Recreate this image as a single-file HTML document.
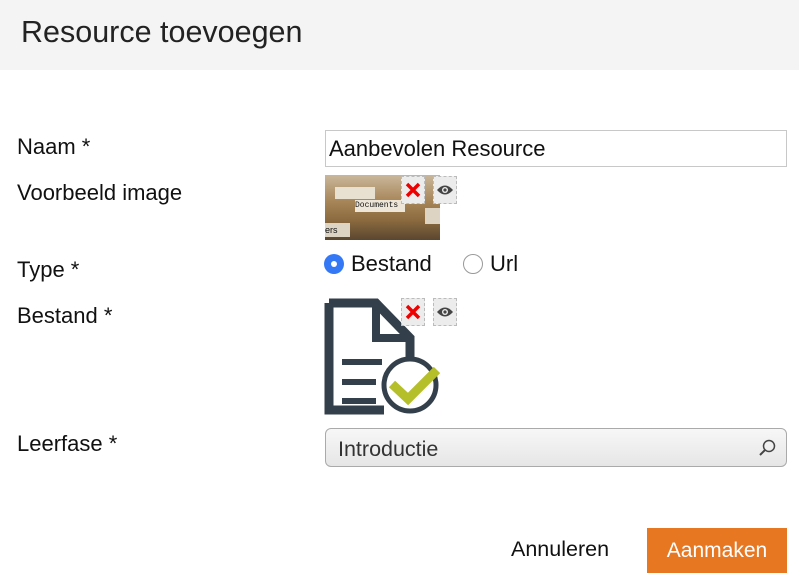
<!DOCTYPE html>
<html><head><meta charset="utf-8"><style>
body{margin:0;width:799px;height:587px;background:#fff;font-family:"Liberation Sans",Arial,sans-serif;color:#111;position:relative;overflow:hidden}
.a{position:absolute}
.hdr{left:0;top:0;width:799px;height:70px;background:#f4f4f4}
.lbl{font-size:22px;left:17px}
.box{border:1px dashed #bbb;background:#ececec;width:24px;height:28px;box-sizing:border-box;display:flex;align-items:center;justify-content:center}
</style></head><body>
<div class="a hdr"></div>
<div class="a" style="left:21px;top:15px;font-size:30.5px;color:#222">Resource toevoegen</div>
<div class="a lbl" style="top:134px">Naam *</div>
<div class="a lbl" style="top:180px">Voorbeeld image</div>
<div class="a lbl" style="top:257px">Type *</div>
<div class="a lbl" style="top:303px">Bestand *</div>
<div class="a lbl" style="top:431px">Leerfase *</div>

<div class="a" style="left:325px;top:130px;width:462px;height:37px;border:1px solid #c8c8c8;box-sizing:border-box;font-size:22px;padding:5px 0 0 3px">Aanbevolen Resource</div>

<div class="a" style="left:325px;top:175px;width:115px;height:65px;background:linear-gradient(180deg,#c9b79a 0%,#a8865a 40%,#8a6a3e 70%,#5a4630 100%)">
 <div class="a" style="left:10px;top:12px;width:40px;height:12px;background:#e8e0d0"></div>
 <div class="a" style="left:30px;top:25px;width:50px;height:12px;background:#eee6d8;font-size:8px;font-family:'Liberation Mono',monospace;line-height:12px">Documents</div>
 <div class="a" style="left:0;top:48px;width:25px;height:14px;background:#ddd4c4;font-size:9px;line-height:14px">ers</div>
 <div class="a" style="left:100px;top:33px;width:15px;height:16px;background:#ddd4c4"></div>
</div>
<div class="a box" style="left:401px;top:176px"><svg width="16" height="16" viewBox="0 0 16 16"><path d="M2 2L14 14M14 2L2 14" stroke="#e00" stroke-width="3.5"/></svg></div>
<div class="a box" style="left:433px;top:176px"><svg width="18" height="12" viewBox="0 0 18 12"><path d="M1 6Q9 -3 17 6Q9 15 1 6Z" fill="#444"/><circle cx="9" cy="6" r="3" fill="#eee"/><circle cx="9" cy="6" r="1.6" fill="#444"/></svg></div>

<div class="a" style="left:324px;top:254px;width:20px;height:20px;border-radius:50%;background:#3478f6"><div class="a" style="left:7px;top:7px;width:6px;height:6px;border-radius:50%;background:#fff"></div></div>
<div class="a" style="left:351px;top:251px;font-size:22px">Bestand</div>
<div class="a" style="left:463px;top:254px;width:20px;height:20px;border-radius:50%;border:1px solid #999;box-sizing:border-box"></div>
<div class="a" style="left:490px;top:251px;font-size:22px">Url</div>

<svg class="a" style="left:324px;top:298px" width="118" height="117" viewBox="0 0 118 117">
 <path d="M5 5H52L86 40V60" fill="none" stroke="#333f4b" stroke-width="9"/>
 <path d="M5 5V112H60" fill="none" stroke="#333f4b" stroke-width="9"/>
 <path d="M52 5V40H86" fill="none" stroke="#333f4b" stroke-width="8"/>
 <path d="M18 64H58M18 84H52M18 103H52" stroke="#333f4b" stroke-width="6"/>
 <circle cx="86" cy="87" r="26" fill="#fff" stroke="#333f4b" stroke-width="5"/>
 <path d="M68 86L84 101L113 72" fill="none" stroke="#b5bf2a" stroke-width="9"/>
</svg>
<div class="a box" style="left:401px;top:298px"><svg width="16" height="16" viewBox="0 0 16 16"><path d="M2 2L14 14M14 2L2 14" stroke="#e00" stroke-width="3.5"/></svg></div>
<div class="a box" style="left:433px;top:298px"><svg width="18" height="12" viewBox="0 0 18 12"><path d="M1 6Q9 -3 17 6Q9 15 1 6Z" fill="#444"/><circle cx="9" cy="6" r="3" fill="#eee"/><circle cx="9" cy="6" r="1.6" fill="#444"/></svg></div>

<div class="a" style="left:325px;top:428px;width:462px;height:39px;border:1px solid #aaa;border-radius:6px;box-sizing:border-box;background:linear-gradient(#f7f7f7,#e6e6e6);font-size:21.5px;padding:8px 0 0 12px;color:#333">Introductie
 <svg class="a" style="right:10px;top:10px" width="18" height="18" viewBox="0 0 18 18"><circle cx="11" cy="7" r="5.5" fill="none" stroke="#444" stroke-width="1.5"/><path d="M7 11L2 16" stroke="#444" stroke-width="2"/></svg>
</div>

<div class="a" style="left:511px;top:537px;font-size:21.5px">Annuleren</div>
<div class="a" style="left:647px;top:528px;width:140px;height:45px;background:#e87722;color:#fff;font-size:21px;text-align:center;line-height:45px">Aanmaken</div>
</body></html>
